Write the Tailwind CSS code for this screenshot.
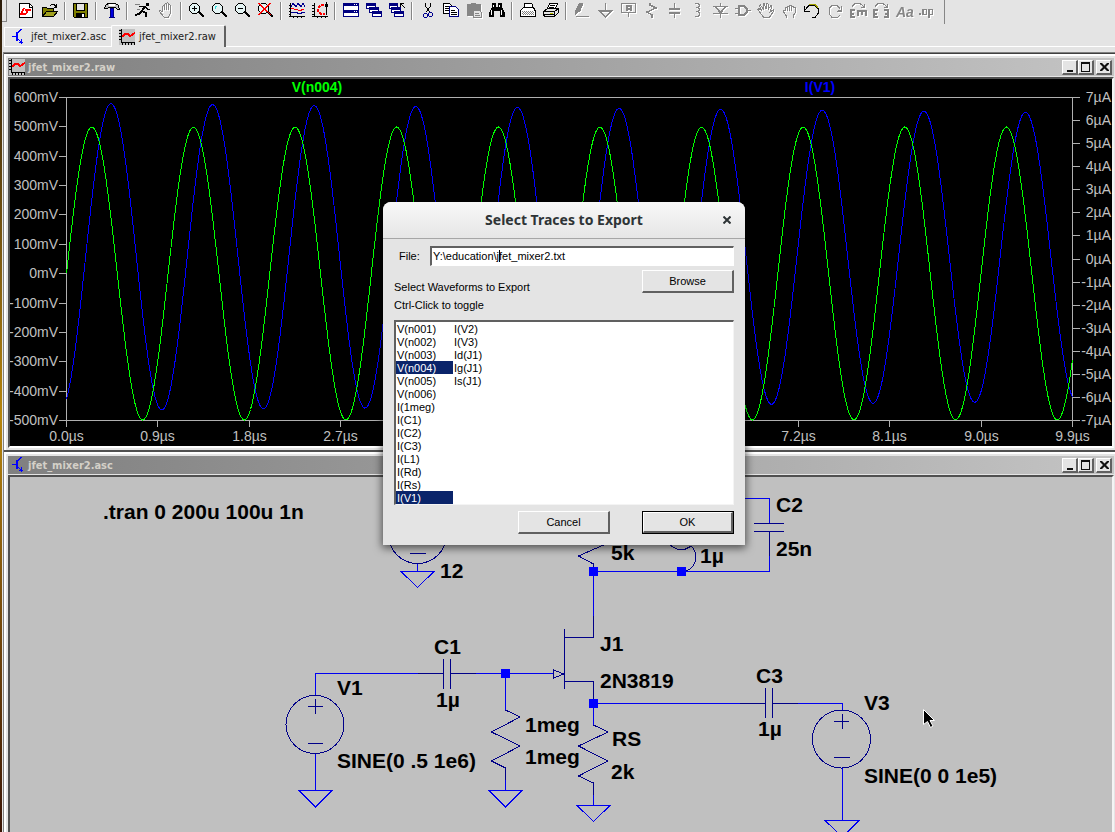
<!DOCTYPE html>
<html lang="en">
<head>
    <meta charset="UTF-8">
    <meta name="viewport" content="width=device-width, initial-scale=1.0">
    <title>LTspice - jfet_mixer2.raw</title>
    <!-- Tailwind CSS -->
    <script src="https://cdn.jsdelivr.net/npm/@tailwindcss/browser@4"></script>
</head>
<body class="flex h-screen overflow-hidden bg-[#e4e4e4] font-['Liberation_Sans',Arial,sans-serif] text-black">
    <!-- sliver of the desktop behind the window -->
    <div class="w-[2px] shrink-0 bg-linear-to-b from-[#2a1a08] via-[#b8860b] to-[#3a1505]"></div>

    <div class="flex min-w-0 flex-1 flex-col">
        <header class="shrink-0">
            <div id="toolbar" role="toolbar" aria-label="Main" class="flex h-6 items-start">
                <div class="mr-2 h-[22px] w-[5px] border-r border-b border-[#868686]"></div>
            </div>

            <nav class="flex h-[23px] items-end pl-[2px] font-['DejaVu_Sans_Condensed','DejaVu_Sans',sans-serif] text-[11px] leading-4 text-[#202020]">
                <a href="#asc" class="flex h-5 w-[107px] items-center gap-1 border-t border-b border-l border-white pl-[6px]">
                    <svg class="size-4 shrink-0" viewBox="0 0 16 16" shape-rendering="crispEdges" fill="none" stroke="#0000ff"><path d="M1 7.500h4M10.500 0l-5 5"/><path stroke-width="2" d="M6 3v9"/><path d="M6.500 9.500l4 4"/><path d="M10.500 10v5M8 13.500h4"/></svg>
                    <span>jfet_mixer2.asc</span>
                </a>
                <a href="#raw" class="flex h-[22px] w-[115px] items-center gap-1 rounded-t-xs border-t border-r-2 border-l border-t-white border-r-[#606060] border-l-white pl-[7px]">
                    <svg class="size-4 shrink-0" viewBox="0 0 16 16" shape-rendering="crispEdges"><path fill="#c0c0c0" d="M0 0h16v16H0z"/><path fill="none" stroke="#000" d="M2.500 0v14M2 13.500h14M0 1.500h2M0 4.500h2M0 7.500h2M0 10.500h2M3.500 14v2M6.500 14v2M9.500 14v2M12.500 14v2M15.500 14v2"/><path fill="none" stroke="red" stroke-width="2" d="M3 8l3-3h3l2 2 5-3"/></svg>
                    <span>jfet_mixer2.raw</span>
                </a>
                <div class="h-px flex-1 bg-white"></div>
            </nav>
            <div class="h-[5px]"></div>
        </header>

        <main class="ml-px flex min-h-0 flex-1 flex-col border-t border-l border-[#808080]">
            <section id="raw" class="shrink-0 border-t border-b-2 border-t-[#404040] border-b-[#505050]">
                <div class="border-t-2 border-l-2 border-white pt-[2px] pr-px pb-[2px] pl-[2px]">
                    <div class="flex h-[18px] items-center bg-linear-to-r from-[#808080] to-[#c4c4c4] pr-[2px] pl-px">
                        <svg class="mr-[3px] size-4 shrink-0" viewBox="0 0 16 16" shape-rendering="crispEdges"><path fill="#c0c0c0" d="M0 0h16v16H0z"/><path fill="none" stroke="#000" d="M2.500 0v14M2 13.500h14M0 1.500h2M0 4.500h2M0 7.500h2M0 10.500h2M3.500 14v2M6.500 14v2M9.500 14v2M12.500 14v2M15.500 14v2"/><path fill="none" stroke="red" stroke-width="2" d="M3 8l3-3h3l2 2 5-3"/></svg>
                        <h2 class="flex-1 pt-px font-['DejaVu_Sans_Condensed','DejaVu_Sans',sans-serif] text-[11px] leading-4 font-bold text-[#d4d0c8]">jfet_mixer2.raw</h2>
                        <div class="win-buttons flex"></div>
                    </div>
                    <div class="mt-px border-t-2 border-r-2 border-b-2 border-l-2 border-t-[#505050] border-r-[#f4f4f4] border-b-white border-l-[#505050] bg-black">
                        <svg id="plot" class="block w-full font-['Liberation_Sans',Arial,sans-serif] text-[14px]" viewBox="10 79 1102 367" fill="none"></svg>
                    </div>
                </div>
            </section>

            <section id="asc" class="min-h-0 flex-1 overflow-hidden">
                <div class="border-t-2 border-l-2 border-white pt-[2px] pr-px pl-[2px]">
                    <div class="flex h-[18px] items-center bg-linear-to-r from-[#808080] to-[#c4c4c4] pr-[2px] pl-[3px]">
                        <svg class="mr-px size-4 shrink-0" viewBox="0 0 16 16" shape-rendering="crispEdges" fill="none" stroke="#0000ff"><path d="M1 7.500h4M10.500 0l-5 5"/><path stroke-width="2" d="M6 3v9"/><path d="M6.500 9.500l4 4"/><path d="M10.500 10v5M8 13.500h4"/></svg>
                        <h2 class="flex-1 pt-px font-['DejaVu_Sans_Condensed','DejaVu_Sans',sans-serif] text-[11px] leading-4 font-bold text-[#d4d0c8]">jfet_mixer2.asc</h2>
                        <div class="win-buttons flex"></div>
                    </div>
                    <div class="mt-px border-t-2 border-r-2 border-l-2 border-t-[#505050] border-r-[#f4f4f4] border-l-[#505050] bg-[#c0c0c0]">
                        <svg class="block w-full font-['Liberation_Sans',Arial,sans-serif] text-[21px] font-bold" viewBox="10 477 1102 355" fill="none">
                            <!-- wires -->
                            <g stroke="#0000f0" shape-rendering="crispEdges">
                                <path d="M315.500 695V673.500H418M476 673.500H553M505.500 673V710M315.500 753V790M505.500 768V790"/>
                                <path d="M593.500 637V571.500H769.500V532M740 498.500H769.500V523M593.500 703.500H740M798 703.500H842.500V710M842.500 767V820M593.500 703V725M593.500 783V805M417.500 563V571"/>
                                <path d="M299 790.500H332L315.500 807ZM489 790.500H522L505.500 807ZM577 805.500H610L593.500 821.500ZM825 820.500H859L842.500 837ZM401 571.500H434L417.500 587.500Z"/>
                            </g>
                            <!-- symbols -->
                            <g stroke="#000088" shape-rendering="crispEdges">
                                <circle cx="315" cy="724.500" r="29"/>
                                <circle cx="841.500" cy="739" r="29"/>
                                <circle cx="417.500" cy="534.500" r="29"/>
                                <path d="M308 706.500H323M315.500 699V714M308 743.500H323M834 721.500H849M842.500 714V729M834 757.500H850M410 553.500H426"/>
                                <path d="M418 673.500H443.500M443.500 659V689M450.500 659V689M450.500 673.500H476"/>
                                <path d="M740 703.500H765.500M765.500 688V718M772.500 688V718M772.500 703.500H798"/>
                                <path d="M754 523.500H784M754 531.500H784M769.500 532V556"/>
                                <path d="M564.500 629V689M564 637.500H593.500V616M564 681.500H593.500V703M553.500 670V678L564 674Z"/>
                                <path d="M505.500 710L520 717L491.500 732L520 746L491.500 761L505.500 768V780"/>
                                <path d="M593.500 725L608 732L578.500 746L608 761L578.500 776L593.500 783V795"/>
                                <path d="M608 543L578.500 556L593.500 564V571M670 545Q681 554 691 546C698 552 698 567 686 571"/>
                            </g>
                            <!-- junctions -->
                            <path fill="#0000ff" d="M501 669h9v9h-9zM589 567h9v9h-9zM677 567h9v9h-9zM589 699h9v9h-9z"/>
                            <g fill="#000">
                                <text x="103" y="519">.tran 0 200u 100u 1n</text>
                                <text x="440" y="578">12</text>
                                <text x="611" y="560">5k</text>
                                <text x="700" y="563">1µ</text>
                                <text x="776" y="512">C2</text>
                                <text x="776" y="556">25n</text>
                                <text x="434" y="654">C1</text>
                                <text x="436" y="707">1µ</text>
                                <text x="337" y="695">V1</text>
                                <text x="337" y="768">SINE(0 .5 1e6)</text>
                                <text x="525" y="732">1meg</text>
                                <text x="525" y="764">1meg</text>
                                <text x="600" y="651">J1</text>
                                <text x="600" y="688">2N3819</text>
                                <text x="612" y="746">RS</text>
                                <text x="611" y="779">2k</text>
                                <text x="756" y="683">C3</text>
                                <text x="758" y="736">1µ</text>
                                <text x="864" y="710">V3</text>
                                <text x="864" y="783">SINE(0 0 1e5)</text>
                            </g>
                            <path fill="#000" stroke="#fff" d="M923.500 709.500v15l4-3 3 6 2.500-1.500-3-5.500h4.500z"/>
                        </svg>
                    </div>
                </div>
            </section>
        </main>
    </div>

    <form role="dialog" aria-labelledby="dialog-title" class="absolute top-[202px] left-[383px] w-[362px] rounded-t-lg bg-[#e4e4e4] text-[11px] leading-[13px] shadow-[0_2px_8px_1px_rgba(0,0,0,0.6)]">
        <div class="flex h-[37px] items-center rounded-t-lg border-b border-[#a6a6a6] bg-linear-to-b from-[#f8f8f8] to-[#e6e6e6] px-3">
            <span class="w-3"></span>
            <h1 id="dialog-title" class="flex-1 text-center font-['Noto_Sans',sans-serif] text-[14px] leading-5 font-bold text-[#2e3436]">Select Traces to Export</h1>
            <button type="button" aria-label="Close" class="flex w-3 justify-center">
                <svg class="size-2 shrink-0" viewBox="0 0 8 8"><path stroke="#2e3436" stroke-width="2" d="M0.500 0.500l7 7M7.500 0.500l-7 7"/></svg>
            </button>
        </div>
        <div class="px-[11px] pt-[7px] pb-[11px]">
            <div class="flex items-center">
                <label for="file" class="w-9 pt-px pl-[5px]">File:</label>
                <div class="relative flex-1">
                    <input id="file" type="text" value="Y:\education\jfet_mixer2.txt" class="block h-5 w-full border-t-2 border-r border-b border-l-2 border-t-[#606060] border-r-white border-b-white border-l-[#606060] bg-white pb-px pl-px text-[11px] outline-none">
                    <span class="absolute top-1 left-[69px] h-3 w-px bg-black"></span>
                </div>
            </div>
            <div class="flex justify-between pt-1">
                <div class="flex flex-col gap-[5px] pt-[11px]">
                    <p>Select Waveforms to Export</p>
                    <p>Ctrl-Click to toggle</p>
                </div>
                <button type="button" class="h-[23px] w-[92px] border-t border-r-2 border-b-2 border-l border-t-white border-r-[#606060] border-b-[#606060] border-l-white pt-px">Browse</button>
            </div>
            <ul id="traces" role="listbox" aria-multiselectable="true" aria-label="Select Waveforms to Export" class="mt-2 grid grid-flow-col grid-cols-[57px_57px] grid-rows-[repeat(14,13px)] border-t-2 border-r border-b border-l-2 border-t-[#606060] border-r-[#f4f4f4] border-b-[#f4f4f4] border-l-[#606060] bg-white"></ul>
            <div class="flex justify-end gap-8 pt-[6px]">
                <button type="button" class="h-[23px] w-[92px] border-t border-r-2 border-b-2 border-l border-t-white border-r-[#606060] border-b-[#606060] border-l-white pt-px">Cancel</button>
                <button type="submit" class="h-[23px] w-[92px] border border-black">
                    <span class="flex h-full items-center justify-center border-t border-r-2 border-b-2 border-l border-t-white border-r-[#606060] border-b-[#606060] border-l-white pt-px">OK</span>
                </button>
            </div>
        </div>
    </form>

    <script>
        (() => {
            const lens = '<path d="M9 9l6 6" stroke="#000" stroke-width="2"/><path d="M3.500 1.500h4l3 3v4l-3 3h-4l-3-3v-4z" stroke="#000" fill="#e4f4f4"/>';

            // 16x16 toolbar glyphs, one array per group: [label, markup, disabled]
            const groups = [
                [
                    ['New Schematic', '<path fill="#fff" stroke="#000" d="M.500 1.500h10l3 3v11H.500z"/><path stroke="#000" d="M10.500 1v4h3"/><path stroke="red" stroke-width="2" d="M5 6L2 12h5M6 8h6M9 8l-2 4"/>'],
                    ['Open', '<path fill="#808000" stroke="#000" d="M.500 14.500v-9h4l1 1h6v3"/><path fill="#a0a020" stroke="#000" d="M.500 14.500l4-5h11l-4 5z"/><path stroke="#000" d="M8 3.500l2-1h2l2 2M14.500 2v3h-3"/>'],
                ],
                [
                    ['Save', '<path fill="#808000" stroke="#000" d="M.500 1.500h14v14h-13l-1-1z"/><path fill="#e4e4e4" stroke="#000" d="M3.500 1.500h8v7h-8z"/><path fill="#000" d="M3 11h9v5H3z"/><path fill="#fff" d="M9 12h2v3H9z"/>'],
                ],
                [
                    ['Control Panel', '<path fill="#c0c0c0" stroke="#000" d="M.500 5.500l2-3 2-1h7l3 2 1 4h-2l-2-2h-7l-1 1h-3z"/><path fill="#fff" d="M5 2h6v2H5z"/><path fill="#0000e0" stroke="#000080" d="M6.500 6.500h3v8l1 1h-5l1-1z"/>'],
                ],
                [
                    ['Run', '<path fill="#000" d="M11 1h3v3h-3z"/><path stroke="#000" stroke-width="2" d="M10 4L7 9l4 2v4M7 9l-3 3-4 1"/><path stroke="#000" d="M4 4.500h6l3 3h2"/><path stroke="#808080" d="M0 2.500h5M2 7.500h3"/>'],
                    ['Halt', '<path stroke="#868686" d="M4.500 10V4.500l1-1 1 1V8V2.500l1-1 1 1V8V1.500l1-1 1 1V8V3.500l1-1 1 1V11l-2 4H6l-5-6 1-1 2 2"/>', true],
                ],
                [
                    ['Zoom In', lens + '<path d="M3 6.500h5M5.500 4v5" stroke="#000"/>'],
                    ['Pan', lens + '<path d="M3 6.500v-2h2" stroke="#40e0e0"/>'],
                    ['Zoom Out', lens + '<path d="M3 6.500h5" stroke="#000"/>'],
                    ['Zoom Full Extents', lens + '<path d="M0 1l13 12M13 1L1 13" stroke="red"/><path d="M1 1l12 12M12 1L0 13" stroke="red"/>'],
                ],
                [
                    ['Autorange', '<path stroke="#000" d="M1.500 1v14M0 14.500h16M0 3.500h1M0 6.500h1M0 9.500h1M0 12.500h1M4.500 15v1M8.500 15v1M12.500 15v1"/><path stroke="#000090" d="M2 4.500l2-3 3 3 2-3 3 3 2-3 2 3M2 10.500h6l1 1h3l1-1h3"/><path fill="red" d="M2 6h3v1h4v1h3V7h3v1h-2v1H9V8H5V7H2z"/>'],
                    ['Plot Settings', '<path stroke="#000" d="M2.500 1v14M0 14.500h16M0 3.500h2M0 6.500h2M0 9.500h2M0 12.500h2M5.500 15v1M9.500 15v1M13.500 15v1M14.500 2v11M13 4.500l1.500-3 1.500 3"/><path stroke="red" stroke-width="2" stroke-dasharray="3 1" d="M12 3H9L6 6v3l3 3h4"/>'],
                ],
                [
                    ['Tile', '<path fill="#fff" stroke="#000080" d="M.500 1.500h15v7H.500zM.500 8.500h15v6H.500z"/><path fill="#000080" d="M0 1h16v3H0zM0 8h16v3H0z"/><path stroke="#fff" d="M11 2.500h1M13 2.500h1M11 9.500h1M13 9.500h1"/>'],
                    ['Cascade', '<path fill="#fff" stroke="#000080" d="M.500 1.500h9v5h-9zM3.500 5.500h9v5h-9zM6.500 9.500h9v5h-9z"/><path fill="#000080" d="M0 1h10v3H0zM3 5h10v3H3zM6 9h10v3H6z"/>'],
                    ['Close All', '<path fill="#fff" stroke="#000080" d="M.500 1.500h8v5h-8zM2.500 5.500h9v5h-9zM5.500 9.500h9v5h-9z"/><path fill="#000080" d="M0 1h9v3H0zM2 5h10v3H2zM5 9h10v3H5z"/><path stroke="#000" d="M16 6l-4-4M11.500 5V1.500H15"/>'],
                ],
                [
                    ['Cut', '<path stroke="#000" d="M5.500 1v3l4 6M10.500 1v3l-4 6"/><path stroke="#000090" d="M4.500 11.500h2l1 1v2l-1 1h-2l-1-1v-2zM9.500 10.500h2l1 1v2l-1 1h-2l-1-1v-2z"/>'],
                    ['Copy', '<path fill="#fff" stroke="#000" d="M.500 1.500h6l3 3v7h-9z"/><path stroke="#000" d="M2 4.500h4M2 6.500h5M2 8.500h5"/><path fill="#fff" stroke="#000080" d="M6.500 4.500h6l3 3v7h-9z"/><path stroke="#000" d="M8 8.500h4M8 10.500h6M8 12.500h6"/>'],
                    ['Paste', '<path fill="#868686" d="M1 2h4V1h5v1h5v12H1z"/><path fill="#e4e4e4" stroke="#868686" d="M7.500 8.500h6l2 2v5h-8z"/><path stroke="#868686" d="M9 11.500h4M9 13.500h5"/>', true],
                    ['Find', '<path fill="#000" d="M3 1h4v4h2V1h4v4l3 6v4h-5V9H5v6H0v-4l3-6z"/><path stroke="#fff" d="M4.500 3v2M2.500 8v5M10.500 3v2M12.500 8v5"/>'],
                ],
                [
                    ['Print Setup', '<path fill="#fff" stroke="#000" d="M4.500 5.500v-4h7l1 1v3M.500 8.500l3-3h10l1.500 3v6h-14.500z"/><path stroke="#808080" stroke-dasharray="1 1" d="M2 9.500h12M3 10.500h11M2 11.500h12M3 12.500h11"/>'],
                    ['Print', '<path fill="#fff" stroke="#000" d="M4.500 6.500l2-5h8l-2 5"/><path stroke="#000" d="M7 3.500h5M6 5.500h5"/><path fill="#e4e4e4" stroke="#000" d="M.500 9.500l4-3h11v4l-4 4h-10l-1-2z"/><path stroke="#000" d="M.500 9.500h11v5M11.500 9.500l4-3M1 12.500h10"/><path fill="#c0c000" d="M7 11h3v1H7z"/>'],
                ],
                [
                    ['Wire', '<path fill="#868686" d="M5 1h4v2L6 10H4l-2 3H1V9z"/><path stroke="#868686" d="M2 14.500h13"/>', true],
                    ['Ground', '<path stroke="#868686" d="M8.500 1v7M1 8.500h15"/><path fill="#868686" d="M1 8h15l-7 8H8zM5 10l3.500 4 3.500-4z" fill-rule="evenodd"/>', true],
                    ['Label Net', '<path stroke="#868686" d="M1.500 1.500h14v9h-14zM8.500 11v4"/><path stroke="#868686" stroke-width="2" d="M7 9V4h4v5M7 7h4"/>', true],
                    ['Resistor', '<path stroke="#868686" d="M6.500 1v2l6 3-9 4 5 3v3"/><path stroke="#868686" d="M7.500 1v2l6 3-9 4 5 3v3"/>', true],
                    ['Capacitor', '<path stroke="#868686" stroke-width="2" d="M3 7h11M3 11h11"/><path stroke="#868686" d="M8.500 1v6M8.500 11v5"/>', true],
                    ['Inductor', '<path stroke="#868686" d="M6 1.500h3l1 1v2l-1 1H7h2l1 1v2l-1 1H7h2l1 1v3l-1 1H6"/><path stroke="#868686" d="M10.500 2v3M10.500 6v3M10.500 10v3"/>', true],
                    ['Diode', '<path stroke="#868686" d="M8.500 1v3M1 4.500h15M3 5l5.500 6L14 5M4 5l4.500 5L13 5M1 11.500h15M8.500 11v5"/>', true],
                    ['Component', '<path stroke="#868686" stroke-width="2" d="M4 4h5l3 3v3l-3 3H4z"/><path stroke="#868686" d="M0 6.500h4M0 11.500h4M12 8.500h4"/>', true],
                    ['Move', '<path stroke="#868686" d="M5.500 15L1.500 10 0 7.500l1-1L4 9 1.500 4l1-1L6 8 5 2l1-1 2 6 1-6 1 1v6l3-5 1 1-2 6 3-2v2l-4 6z"/>', true],
                    ['Drag', '<path stroke="#868686" d="M5.500 16v-2L2.500 10V8.500H4V5.500h2v-1h2v-1h2v1h2v1h2V11l-2 3v2M6.500 5v4M8.500 5v4M10.500 5v4"/>', true],
                    ['Undo', '<path stroke="#000" d="M2 6.500l3-3h6l3 3v5l-3 4H8M.500 4v5H6M.500 8.500l3-3"/><path stroke="#a0a000" d="M5 2.500h6l3 3"/>'],
                    ['Redo', '<path stroke="#868686" d="M13 6.500l-3-3H5l-3 3v5l3 4h5l3-2M14.500 4v5H10M11 8.500h3"/>', true],
                    ['Rotate', '<path stroke="#868686" d="M2 4.500l3-3h5l4 3M14.500 2v3H11"/><path stroke="#868686" stroke-width="2" d="M5 8H1v7h4M1 12h3M8 14V9h8v5M12 9v4"/>', true],
                    ['Mirror', '<path stroke="#868686" d="M2 4.500l3-3h5l4 3M14.500 2v3H11"/><path stroke="#868686" stroke-width="2" d="M5 8H1v7h4M1 12h3M11 8h4v7h-4M15 12h-3"/>', true],
                    ['Text', '<text x="0" y="15" fill="#868686" class="font-[\'Liberation_Serif\',serif] text-[14px] font-bold italic">Aa</text>', true],
                    ['SPICE Directive', '<path fill="#868686" d="M0 11h2v2H0z"/><path stroke="#868686" d="M3.500 7.500h4v5h-4zM9.500 16V7.500h4v5h-4M4.500 7v5M10.500 7v9"/>', true],
                ],
            ];

            const toolbar = document.getElementById('toolbar');
            groups.forEach((group, i) => {
                if (i > 0) {
                    toolbar.insertAdjacentHTML('beforeend', '<div class="mx-[3px] mt-[2px] h-[18px] w-[2px] shrink-0 border-r border-l border-l-[#868686] border-r-white"></div>');
                }
                group.forEach(([label, glyph, disabled]) => {
                    const button = document.createElement('button');
                    button.type = 'button';
                    button.title = label;
                    button.disabled = !!disabled;
                    button.className = 'flex h-[22px] w-[23px] shrink-0 justify-center pt-[2px]';
                    button.innerHTML = `<svg class="${disabled ? 'size-4 shrink-0 overflow-visible drop-shadow-[1px_1px_0_#fff]' : 'size-4 shrink-0 overflow-visible'}" viewBox="0 0 16 16" fill="none" shape-rendering="crispEdges">${glyph}</svg>`;
                    toolbar.appendChild(button);
                });
            });
            toolbar.insertAdjacentHTML('beforeend', '<div class="ml-[6px] h-6 border-l border-[#868686]"></div>');

            // Minimize / maximize / close
            const boxes = [
                ['Minimize', 'M3 9h6v2H3z', 'flex h-[15px] w-4 items-center justify-center border-t border-r-2 border-b-2 border-l border-t-white border-r-[#606060] border-b-[#606060] border-l-white bg-[#e4e4e4]'],
                ['Maximize', 'M1 1h9v10H1zM2 3v7h7V3z', 'flex h-[15px] w-4 items-center justify-center border-t border-r-2 border-b-2 border-l border-t-white border-r-[#606060] border-b-[#606060] border-l-white bg-[#e4e4e4]'],
                ['Close', 'M2 2h2l2.500 2.500L9 2h2v1L8 6l3 3v1H9L6.500 7.500 4 10H2V9l3-3-3-3z', 'ml-[2px] flex h-[15px] w-4 items-center justify-center border-t border-r-2 border-b-2 border-l border-t-white border-r-[#606060] border-b-[#606060] border-l-white bg-[#e4e4e4]'],
            ];
            document.querySelectorAll('.win-buttons').forEach(holder => {
                holder.innerHTML = boxes.map(([label, d, cls]) =>
                    `<button type="button" aria-label="${label}" class="${cls}"><svg class="size-3 shrink-0" viewBox="0 0 12 12"><path fill="#101010" fill-rule="evenodd" d="${d}"/></svg></button>`).join('');
            });

            // Trace list
            const traces = ['V(n001)', 'V(n002)', 'V(n003)', 'V(n004)', 'V(n005)', 'V(n006)', 'I(1meg)', 'I(C1)', 'I(C2)', 'I(C3)', 'I(L1)', 'I(Rd)', 'I(Rs)', 'I(V1)', 'I(V2)', 'I(V3)', 'Id(J1)', 'Ig(J1)', 'Is(J1)'];
            const selected = ['V(n004)', 'I(V1)'];
            document.getElementById('traces').innerHTML = traces.map(name => {
                const on = selected.includes(name);
                return `<li role="option" aria-selected="${on}" class="${on ? 'bg-[#0a246a] pl-px leading-[14px] text-white' : 'pl-px leading-[14px]'}">${name}</li>`;
            }).join('');

            // Waveform pane
            const left = 66.5, right = 1072.5, top = 97.5, bottom = 420.5;
            const period = (right - left) / 9.9;
            let axes = `M59 ${top}H1080M59 ${bottom}H1080M${left} ${top}V427M${right} ${top}V427`;
            let labels = '';
            for (let i = 0; i <= 11; i++) {
                const y = Math.floor(top + i * (bottom - top) / 11) + 0.5;
                axes += `M59 ${y}H66`;
                labels += `<text x="58" y="${y + 4.5}" text-anchor="end">${600 - i * 100}mV</text>`;
                const x = Math.floor(left + i * (right - left) / 11) + 0.5;
                axes += `M${x} 420V427`;
                labels += `<text x="${x}" y="441" text-anchor="middle">${(i * 0.9).toFixed(1)}µs</text>`;
            }
            for (let i = 0; i <= 14; i++) {
                const y = Math.floor(top + i * (bottom - top) / 14) + 0.5;
                axes += `M1073 ${y}H1080`;
                labels += `<text x="1111" y="${y + 4.5}" text-anchor="end">${7 - i}µA</text>`;
            }
            const trace = fn => {
                const points = [];
                for (let x = left; x <= right; x += 2) {
                    points.push(`${x},${fn(x).toFixed(1)}`);
                }
                return points.join(' ');
            };
            const green = trace(x => 273.5 - 146.5 * Math.sin(2 * Math.PI * (x - left) / period));
            const blue = trace(x => 257 - (153.5 - 8.5 * (x - 111) / 915) * Math.cos(2 * Math.PI * (x - 111) / period));
            document.getElementById('plot').innerHTML = `
                <path d="${axes}" stroke="#b0b0b0" shape-rendering="crispEdges"/>
                <g fill="#c0c0c0">${labels}</g>
                <polyline points="${blue}" stroke="#0000ff" shape-rendering="crispEdges"/>
                <polyline points="${green}" stroke="#00ff00" shape-rendering="crispEdges"/>
                <text x="317" y="92" text-anchor="middle" fill="#00ff00" class="font-bold">V(n004)</text>
                <text x="820" y="92" text-anchor="middle" fill="#0000ff" class="font-bold">I(V1)</text>`;
        })();
    </script>
</body>
</html>
